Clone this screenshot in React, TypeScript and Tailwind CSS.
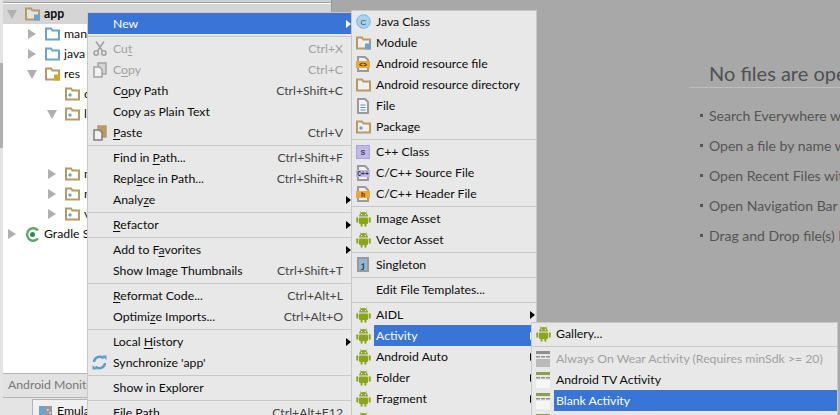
import type { ReactNode } from "react";

const Android = () => (
  <svg width="15" height="16" viewBox="0 0 15 16" className="shrink-0">
    <g fill="#8aa51d">
      <path d="M3 5.6a4.5 4.5 0 0 1 9 0z" />
      <path d="M4.4.6 5.6 2.6M10.6.6 9.4 2.6" stroke="#8aa51d" strokeWidth="1" />
      <rect x="3" y="6.4" width="9" height="6.6" rx="1" />
      <rect x="0.3" y="6.2" width="2" height="5.6" rx="1" />
      <rect x="12.7" y="6.2" width="2" height="5.6" rx="1" />
      <rect x="4.6" y="12" width="2" height="3.8" rx="1" />
      <rect x="8.4" y="12" width="2" height="3.8" rx="1" />
    </g>
    <rect x="5" y="3" width="1.2" height="1.2" fill="#e8e8e8" />
    <rect x="8.8" y="3" width="1.2" height="1.2" fill="#e8e8e8" />
  </svg>
);

const Folder = ({ kind }: { kind?: "module" | "pkg" | "blue" | "res" }) => {
  const c = kind === "blue" ? "#6ba4c8" : "#b89a64";
  return (
    <svg width="15" height="14" viewBox="0 0 15 14" className="shrink-0">
      <path d="M1 1.5h5l1.4 2H14v9H1z" fill="#fff" fillOpacity="0.35" stroke={c} strokeWidth="2" />
      {kind === "module" && <rect x="9" y="7.5" width="6" height="6" fill="#6ba4c8" />}
      {kind === "pkg" && <circle cx="5" cy="8" r="1.7" fill="#6ba4c8" />}
      {kind === "res" && <rect x="9" y="7.5" width="6" height="6" fill="#d9a520" />}
    </svg>
  );
};

const FileIcon = ({ badge, bg, fg = "#333" }: { badge?: string; bg?: string; fg?: string }) => (
  <svg width="14" height="16" viewBox="0 0 14 16" className="shrink-0">
    <path d="M2 1h7l3 3v11H2z" fill="#f2f2f2" stroke="#9a9a9a" strokeWidth="2" />
    {bg && <rect x="0" y="5" width="14" height="7" fill={bg} />}
    {badge && (
      <text x="7" y="11" fontSize="6.5" fontWeight="700" textAnchor="middle" fill={fg} fontFamily="Liberation Mono">
        {badge}
      </text>
    )}
    {!bg && <path d="M4.5 7h5M4.5 9.5h5M4.5 12h5" stroke="#5b94bb" strokeWidth="1" />}
  </svg>
);

const Circle = () => (
  <svg width="15" height="15" viewBox="0 0 15 15" className="shrink-0">
    <circle cx="7.5" cy="7.5" r="6.8" fill="#a6d2ee" stroke="#7ab3d8" />
    <text x="7.5" y="10.5" fontSize="8" textAnchor="middle" fill="#345" fontFamily="Liberation Sans">C</text>
  </svg>
);

const CppClass = () => (
  <svg width="14" height="14" viewBox="0 0 14 14" className="shrink-0">
    <rect x="0.5" y="0.5" width="13" height="13" fill="#c1b9ee" stroke="#a9a0dc" />
    <text x="7" y="10" fontSize="8" fontWeight="700" textAnchor="middle" fill="#444" fontFamily="Liberation Mono">S</text>
  </svg>
);

const Singleton = () => (
  <svg width="12" height="15" viewBox="0 0 12 15" className="shrink-0">
    <rect x="1" y="1" width="10" height="13" fill="#8db8d8" stroke="#9a9a9a" strokeWidth="2" />
    <text x="6" y="11" fontSize="8" fontWeight="700" textAnchor="middle" fill="#234" fontFamily="Liberation Mono">j</text>
  </svg>
);

const Layout = ({ muted }: { muted?: boolean }) => (
  <svg width="14" height="16" viewBox="0 0 14 16" className="shrink-0">
    <rect width="14" height="3" fill={muted ? "#8f8f8f" : "#8aa04a"} />
    <path d="M0 5h4v1.5H0zM5 5h4v1.5H5zM10 5h4v1.5h-4z" fill="#8f8f8f" />
    <rect y="8" width="14" height="8" fill={muted ? "#bababa" : "#f6f6f6"} />
  </svg>
);

const Scissors = () => (
  <svg width="14" height="15" viewBox="0 0 14 15" className="shrink-0" fill="none" stroke="#a3a3a3" strokeWidth="1.6">
    <path d="M3 0.5 9.5 10M11 0.5 4.5 10" />
    <circle cx="3.2" cy="12" r="2.2" />
    <circle cx="10.8" cy="12" r="2.2" />
  </svg>
);

const Copy = ({ paste }: { paste?: boolean }) => (
  <svg width="14" height="16" viewBox="0 0 14 16" className="shrink-0">
    <path d="M5 1h8v11H5z" fill={paste ? "#b89a64" : "#d4d4d4"} stroke={paste ? "#b89a64" : "#a3a3a3"} strokeWidth="1.5" />
    <path d="M1 5h5.5L9 7.5V15H1z" fill="#f2f2f2" stroke={paste ? "#7f7f7f" : "#a3a3a3"} strokeWidth="1.5" />
  </svg>
);

const Sync = () => (
  <svg width="15" height="15" viewBox="0 0 15 15" className="shrink-0" fill="none" stroke="#5a9ccb" strokeWidth="2.4">
    <path d="M2 7a5.5 5.5 0 0 1 9.5-3.5" />
    <path d="M13 8a5.5 5.5 0 0 1-9.5 3.5" />
    <path d="M10 0.5h4.5V5zM5 14.5H.5V10z" fill="#5a9ccb" stroke="none" />
  </svg>
);

// "_" marks the mnemonic letter
const Label = ({ text }: { text: string }) => {
  const i = text.indexOf("_");
  if (i < 0) return <>{text}</>;
  return (
    <>
      {text.slice(0, i)}
      <u className="underline-offset-2">{text[i + 1]}</u>
      {text.slice(i + 2)}
    </>
  );
};

type Item = {
  label?: string;
  icon?: ReactNode;
  keys?: string;
  sub?: boolean;
  off?: boolean;
  active?: boolean;
  sep?: boolean;
};

const Arrow = ({ active }: { active?: boolean }) => (
  <span
    className={`h-0 w-0 border-y-[4px] border-l-[5px] border-y-transparent ${active ? "border-l-white" : "border-l-black"}`}
  />
);

const Row = ({ item, gutter }: { item: Item; gutter: string }) => {
  if (item.sep) return <div className="my-[1.5px] h-px bg-[#c8c8c8]" />;
  const tone = item.off ? "text-[#a0a0a0]" : item.active ? "text-white" : "text-[#0c0c0c]";
  return (
    <div className={`flex h-[21px] items-center ${item.active && !item.icon ? "bg-[#3875d7]" : ""}`}>
      <div className={`flex h-full shrink-0 items-center justify-center ${gutter}`}>{item.icon}</div>
      <div
        className={`flex h-full flex-1 items-center justify-between pl-[2px] pr-[1px] whitespace-nowrap ${tone} ${item.active ? "bg-[#3875d7]" : ""}`}
      >
        <span className="pt-px">{item.label && <Label text={item.label} />}</span>
        {item.keys && (
          <span className={`pr-[8px] pt-px ${item.off ? "text-[#a0a0a0]" : "text-[#444]"}`}>{item.keys}</span>
        )}
        {item.sub && <Arrow active={item.active} />}
      </div>
    </div>
  );
};

const mainMenu: Item[] = [
  { label: "New", sub: true, active: true },
  { sep: true },
  { label: "Cu_t", icon: <Scissors />, keys: "Ctrl+X", off: true },
  { label: "C_opy", icon: <Copy />, keys: "Ctrl+C", off: true },
  { label: "C_opy Path", keys: "Ctrl+Shift+C" },
  { label: "Copy as Plain Text" },
  { label: "_Paste", icon: <Copy paste />, keys: "Ctrl+V" },
  { sep: true },
  { label: "Find in _Path...", keys: "Ctrl+Shift+F" },
  { label: "Repl_ace in Path...", keys: "Ctrl+Shift+R" },
  { label: "Analy_ze", sub: true },
  { sep: true },
  { label: "_Refactor", sub: true },
  { sep: true },
  { label: "Add to F_avorites", sub: true },
  { label: "Show Image Thumbnails", keys: "Ctrl+Shift+T" },
  { sep: true },
  { label: "_Reformat Code...", keys: "Ctrl+Alt+L" },
  { label: "Optimi_ze Imports...", keys: "Ctrl+Alt+O" },
  { sep: true },
  { label: "Local _History", sub: true },
  { label: "Synchronize 'app'", icon: <Sync /> },
  { sep: true },
  { label: "Show in Explorer" },
  { sep: true },
  { label: "File Path", keys: "Ctrl+Alt+F12" },
];

const newMenu: Item[] = [
  { label: "Java Class", icon: <Circle /> },
  { label: "Module", icon: <Folder kind="module" /> },
  { label: "Android resource file", icon: <FileIcon badge="<>" bg="#f0a732" /> },
  { label: "Android resource directory", icon: <Folder /> },
  { label: "File", icon: <FileIcon /> },
  { label: "Package", icon: <Folder kind="pkg" /> },
  { sep: true },
  { label: "C++ Class", icon: <CppClass /> },
  { label: "C/C++ Source File", icon: <FileIcon badge="C++" bg="#c1b9ee" /> },
  { label: "C/C++ Header File", icon: <FileIcon badge="h" bg="#f0a732" /> },
  { sep: true },
  { label: "Image Asset", icon: <Android /> },
  { label: "Vector Asset", icon: <Android /> },
  { sep: true },
  { label: "Singleton", icon: <Singleton /> },
  { sep: true },
  { label: "Edit File Templates..." },
  { sep: true },
  { label: "AIDL", icon: <Android />, sub: true },
  { label: "Activity", icon: <Android />, sub: true, active: true },
  { label: "Android Auto", icon: <Android />, sub: true },
  { label: "Folder", icon: <Android />, sub: true },
  { label: "Fragment", icon: <Android />, sub: true },
  { label: "Google", icon: <Android />, sub: true },
];

const activityMenu: Item[] = [
  { label: "Gallery...", icon: <Android /> },
  { sep: true },
  { label: "Always On Wear Activity (Requires minSdk >= 20)", icon: <Layout muted />, off: true },
  { label: "Android TV Activity", icon: <Layout /> },
  { label: "Blank Activity", icon: <Layout />, active: true },
  { label: "Basic Activity", icon: <Layout /> },
];

const Tri = ({ open }: { open?: boolean }) =>
  open ? (
    <span className="h-0 w-0 border-x-[5px] border-t-[9px] border-x-transparent border-t-[#b0b0b0]" />
  ) : (
    <span className="ml-[1px] h-0 w-0 border-y-[5px] border-l-[8px] border-y-transparent border-l-[#b0b0b0]" />
  );

const tree = [
  { depth: 0, tri: "open", icon: <Folder kind="module" />, label: "app", bold: true },
  { depth: 1, tri: "closed", icon: <Folder kind="blue" />, label: "manifests" },
  { depth: 1, tri: "closed", icon: <Folder kind="blue" />, label: "java" },
  { depth: 1, tri: "open", icon: <Folder kind="res" />, label: "res" },
  { depth: 2, icon: <Folder kind="pkg" />, label: "drawable" },
  { depth: 2, tri: "open", icon: <Folder kind="pkg" />, label: "layout" },
  { depth: 3, label: "" },
  { depth: 3, label: "" },
  { depth: 2, tri: "closed", icon: <Folder kind="pkg" />, label: "menu" },
  { depth: 2, tri: "closed", icon: <Folder kind="pkg" />, label: "mipmap" },
  { depth: 2, tri: "closed", icon: <Folder kind="pkg" />, label: "values" },
];

const depthPad = ["pl-[4px]", "pl-[24px]", "pl-[44px]", "pl-[64px]"];

const tips = [
  "Search Everywhere with Double Shift",
  "Open a file by name with Ctrl+Shift+N",
  "Open Recent Files with Ctrl+E",
  "Open Navigation Bar with Alt+Home",
  "Drag and Drop file(s) here from Explorer",
];

export default function App() {
  return (
    <div className="relative flex h-[415px] w-[840px] overflow-hidden bg-[#a8a8a8] font-['Lato',sans-serif] text-[12.25px]">
      <aside className="flex w-[332px] shrink-0 flex-col border-r border-[#9a9a9a] bg-[#e4e4e4] pl-[3px]">
        <div className="h-[3px] shrink-0 border-b border-[#a0a0a0] bg-[#cfcfcf]" />
        <div className="flex-1 overflow-hidden bg-white pt-[1px] text-[#0c0c0c]">
          {tree.map((row, i) => (
            <div
              key={i}
              className={`flex h-[20px] items-center ${depthPad[row.depth]} ${i === 0 ? "bg-[#d5d5d5]" : ""}`}
            >
              <span className="flex w-[18px] shrink-0 items-center">
                {row.tri && <Tri open={row.tri === "open"} />}
              </span>
              <span className="flex w-[19px] shrink-0 items-center">{row.icon}</span>
              <span className={`${row.bold ? "font-bold" : ""}`}>{row.label}</span>
            </div>
          ))}
          <div className="flex h-[20px] items-center pl-[4px]">
            <span className="flex w-[18px] shrink-0 items-center">
              <Tri />
            </span>
            <svg width="15" height="15" viewBox="0 0 15 15" className="mr-[4px] shrink-0" fill="none">
              <path d="M13 3.5A6.2 6.2 0 1 0 13 11.5" stroke="#57a868" strokeWidth="2.4" />
              <circle cx="7.5" cy="7.5" r="2.5" fill="#2e8b4a" />
            </svg>
            <span>Gradle Scripts</span>
          </div>
        </div>
        <div className="flex h-[25px] shrink-0 items-center border-y border-[#b4b4b4] bg-[#e2e2e2] pl-[5px] text-[#777]">
          Android Monitor
        </div>
        <div className="h-[17px] shrink-0 pl-[29px] pt-[1px]">
          <div className="flex h-[24px] w-[200px] items-center gap-[5px] border-l border-t border-[#b4b4b4] bg-[#f0f0f0] pl-[6px] text-[#0c0c0c]">
            <svg width="13" height="11" viewBox="0 0 13 11" className="shrink-0">
              <rect width="6" height="11" fill="#6ba4c8" />
              <rect x="6" width="7" height="11" fill="#9a9a9a" />
              <path d="M8 3h1.5v1.5H8zM10.5 6H12v1.5h-1.5z" fill="#e8e8e8" />
            </svg>
            Emulator
          </div>
        </div>
      </aside>

      {/* project tree scrollbar */}
      <div className="absolute left-0 top-[63px] h-[85px] w-[3px] bg-[#b0b0b0]" />

      <main className="min-w-0 flex-1 overflow-hidden whitespace-nowrap pl-[357px] pt-[61px] text-[14px] text-[#555]">
        <div className="border-b border-[#bdbdbd] pb-[2px] pl-[20px] text-[20px] leading-[24px] text-[#505050]">
          No files are open
        </div>
        <ul className="mt-[17px] flex flex-col gap-[10px]">
          {tips.map((tip) => (
            <li key={tip} className="flex h-[20px] items-center gap-[6px] pl-[11px]">
              <span className="h-[3px] w-[3px] shrink-0 bg-[#555]" />
              {tip}
            </li>
          ))}
        </ul>
      </main>

      <div className="absolute left-[87px] top-[12px] w-[266px] border border-[#c8c8c8] bg-[#e8e8e8]">
        {mainMenu.map((item, i) => (
          <Row key={i} item={item} gutter="w-[23px]" />
        ))}
      </div>

      <div className="absolute left-[351px] top-[10px] w-[186px] border border-[#c8c8c8] bg-[#e8e8e8]">
        {newMenu.map((item, i) => (
          <Row key={i} item={item} gutter="w-[22px]" />
        ))}
      </div>

      <div className="absolute left-[531px] top-[322px] w-[307px] border border-[#c8c8c8] bg-[#e8e8e8]">
        {activityMenu.map((item, i) => (
          <Row key={i} item={item} gutter="w-[22px]" />
        ))}
      </div>
    </div>
  );
}
